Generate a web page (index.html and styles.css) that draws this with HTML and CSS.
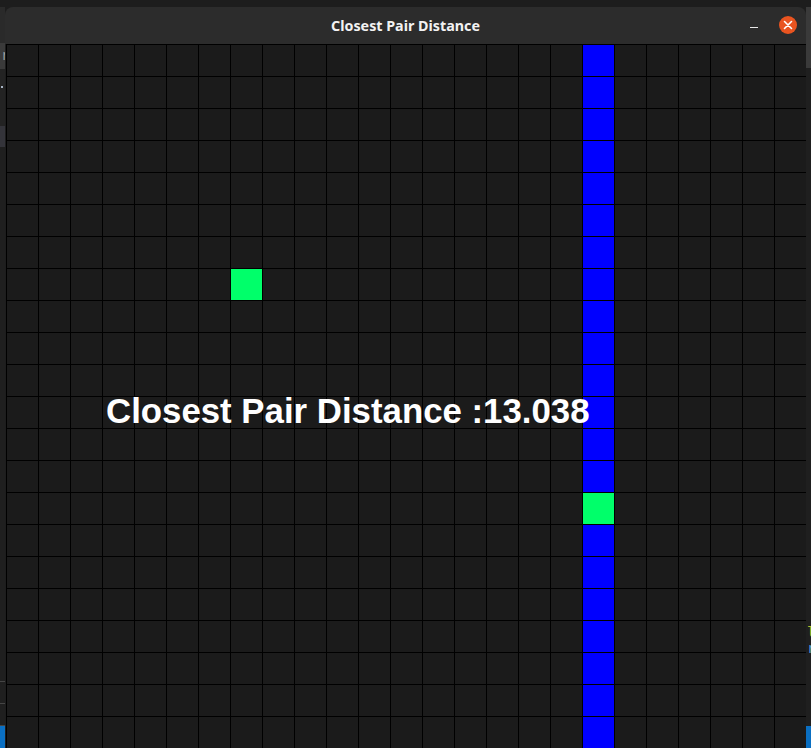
FILE: index.html
```html
<!DOCTYPE html>
<html>
<head>
<meta charset="utf-8">
<link rel="stylesheet" href="styles.css">
</head>
<body>
<div class="desktop">
  <div class="side side-left">
    <div class="seg s-top"></div>
    <div class="seg s-l1"></div>
    <div class="seg s-l2"><span class="glyph-l">r</span></div>
    <div class="seg s-l3"><span class="dot"></span></div>
    <div class="seg s-l4"></div>
    <div class="seg s-l5"></div>
    <div class="seg s-l6"></div>
    <div class="seg s-l6"></div>
    <div class="seg s-blue"></div>
  </div>
  <div class="window">
    <div class="titlebar">
      <span class="title">Closest Pair Distance</span>
      <span class="minimize"></span>
      <span class="close">
        <svg width="18" height="18" viewBox="0 0 18 18"><path d="M5.5 5.5L12.5 12.5M12.5 5.5L5.5 12.5" stroke="#fff" stroke-width="1.6" stroke-linecap="round"/></svg>
      </span>
    </div>
    <div class="board">
      <div class="cell green point-a"></div>
      <div class="column">
        <div class="cell blue"></div><div class="cell blue"></div><div class="cell blue"></div><div class="cell blue"></div>
        <div class="cell blue"></div><div class="cell blue"></div><div class="cell blue"></div><div class="cell blue"></div>
        <div class="cell blue"></div><div class="cell blue"></div><div class="cell blue"></div><div class="cell blue"></div>
        <div class="cell blue"></div><div class="cell blue"></div><div class="cell green"></div><div class="cell blue"></div>
        <div class="cell blue"></div><div class="cell blue"></div><div class="cell blue"></div><div class="cell blue"></div>
        <div class="cell blue"></div><div class="cell blue"></div>
      </div>
      <div class="label">Closest Pair Distance :13.038</div>
    </div>
  </div>
  <div class="side side-right">
    <div class="seg s-top"></div>
    <div class="seg s-r1"></div>
    <div class="seg s-r2">
      <span class="code-l">l</span>
      <span class="code-r">r</span>
    </div>
    <div class="seg s-blue"></div>
  </div>
</div>
</body>
</html>
```
FILE: styles.css
```css
html, body {
  margin: 0;
  padding: 0;
  background: #1d1d1d;
  overflow: hidden;
}
.desktop {
  display: flex;
  width: 811px;
  height: 748px;
}
.side {
  width: 5px;
  display: flex;
  flex-direction: column;
  overflow: hidden;
}
.seg { position: relative; flex: none; }
.s-top { height: 7px; background: #1d1d1d; }
.s-l1 { height: 36px; background: #2a2a2a; }
.s-l2 { height: 26px; background: #3a3a3a; }
.s-l3 { height: 57px; background: #232323; }
.s-l4 { height: 21px; background: #34343a; }
.s-l5 { height: 535px; background: #1f1f1f; border-bottom: 1px solid #454545; box-sizing: border-box; }
.s-l6 { height: 22px; background: #1f1f1f; border-bottom: 1px solid #454545; box-sizing: border-box; }
.s-blue { flex: 1; background: #0a6fc2; }
.glyph-l {
  position: absolute;
  left: 1px;
  top: 4px;
  font: 14px "DejaVu Sans Mono", monospace;
  color: #9a9a9a;
}
.dot {
  position: absolute;
  left: 1px;
  top: 17px;
  width: 2px;
  height: 2px;
  background: #a8b4c4;
}
.s-r1 { height: 61px; background: #3a3a3a; }
.s-r2 { height: 658px; background: #1f1f1f; }
.code-l, .code-r {
  position: absolute;
  left: 1px;
  font: 14px "DejaVu Sans Mono", monospace;
}
.code-l { top: 556px; color: #b5bd2a; }
.code-r { top: 572px; color: #4f9cd6; }

.window {
  width: 801px;
  display: flex;
  flex-direction: column;
  padding-top: 7px;
  background: #1d1d1d;
}
.titlebar {
  position: relative;
  height: 37px;
  background: #2c2c2c;
  border-radius: 8px 8px 0 0;
  display: flex;
  align-items: center;
  justify-content: center;
}
.title {
  font: bold 14.3px "Noto Sans", "Open Sans", sans-serif;
  color: #f2f2f2;
}
.minimize {
  position: absolute;
  left: 745px;
  top: 20px;
  width: 8px;
  height: 1px;
  background: #e8e8e8;
}
.close {
  position: absolute;
  left: 774px;
  top: 9px;
  width: 18px;
  height: 18px;
  border-radius: 50%;
  background: #e95420;
  display: flex;
}
.board {
  position: relative;
  margin-left: 1px;
  width: 800px;
  height: 704px;
  background-color: #1b1b1b;
  background-image:
    linear-gradient(to right, #000 1px, transparent 1px),
    linear-gradient(to bottom, #000 1px, transparent 1px);
  background-size: 32px 32px;
  display: grid;
  grid-template-columns: repeat(25, 32px);
  grid-template-rows: repeat(22, 32px);
}
.cell {
  width: 31px;
  height: 31px;
  margin: 1px 0 0 1px;
}
.column .cell { margin: 0; height: 31px; border-top: 1px solid #000; margin-left: 1px; }
.blue { background: #0000ff; }
.green { background: #00ff6a; }
.point-a { grid-column: 8; grid-row: 8; }
.column {
  grid-column: 19;
  grid-row: 1 / -1;
  display: flex;
  flex-direction: column;
}
.label {
  position: absolute;
  left: 100px;
  top: 347px;
  font: bold 34.8px "Liberation Sans", Arial, sans-serif;
  line-height: 40px;
  color: #ffffff;
  white-space: nowrap;
}
```
